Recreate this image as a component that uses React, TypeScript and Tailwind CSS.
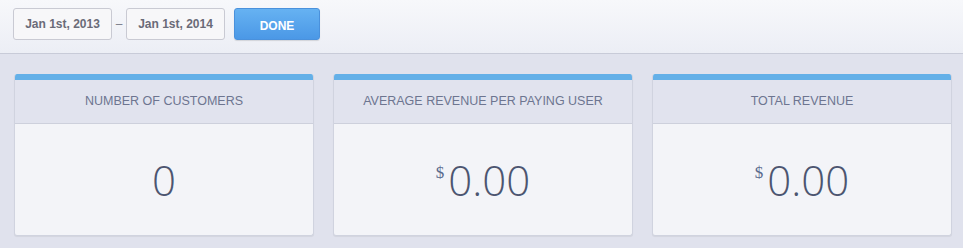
import React from "react";

interface Stat {
  label: string;
  value: string;
  currency?: boolean;
}

const stats: Stat[] = [
  { label: "NUMBER OF CUSTOMERS", value: "0" },
  { label: "AVERAGE REVENUE PER PAYING USER", value: "0.00", currency: true },
  { label: "TOTAL REVENUE", value: "0.00", currency: true },
];

function DateBox({ text }: { text: string }) {
  return (
    <div className="w-[99px] h-[32px] flex items-center justify-center rounded-[3px] border border-[#c9cad3] bg-[#f7f7f9] text-[12px] font-bold text-[#6a6b78]">
      {text}
    </div>
  );
}

function StatCard({ stat }: { stat: Stat }) {
  return (
    <div className="flex flex-col rounded-[3px] overflow-hidden border border-[#d0d3df] border-t-0 bg-[#f3f4f8] shadow-[0_1px_1px_rgba(0,0,0,0.06)]">
      <div className="h-[6px] bg-[#64b0e8]" />
      <div className="h-[44px] flex items-center justify-center bg-[#e1e3ee] border-b border-[#cdd0dc] text-[12.5px] text-[#6d7590]">
        {stat.label}
      </div>
      <div className="h-[111px] flex items-center justify-center text-[#4c5570]">
        {stat.currency && (
          <span className="font-['Liberation_Serif',serif] text-[17px] text-[#5a6a8e] self-start mt-[36px] mr-[4px]">
            $
          </span>
        )}
        <span className="font-['Open_Sans',sans-serif] font-light text-[42px] leading-none">
          {stat.value}
        </span>
      </div>
    </div>
  );
}

export default function App() {
  return (
    <div className="w-[963px] h-[248px] bg-[#e0e2ed] font-['Liberation_Sans',Arial,sans-serif]">
      <div className="h-[54px] flex items-start pt-[8px] pl-[13px] bg-gradient-to-b from-[#f7f8fb] to-[#eceef5] border-b border-[#c8cbd8]">
        <DateBox text="Jan 1st, 2013" />
        <span className="w-[14px] h-[32px] flex items-center justify-center text-[12px] text-[#7a7c88]">
          –
        </span>
        <DateBox text="Jan 1st, 2014" />
        <button className="ml-[9px] w-[86px] h-[32px] flex items-start justify-center pt-[8px] rounded-[3px] border border-[#4a91dc] bg-gradient-to-b from-[#66b2f2] to-[#4b98e6] text-white text-[12px] font-bold shadow-[0_1px_1px_rgba(0,0,0,0.12)]">
          DONE
        </button>
      </div>
      <div className="grid grid-cols-3 gap-[19px] pt-[20px] pl-[14px] pr-[11px]">
        {stats.map((s) => (
          <StatCard key={s.label} stat={s} />
        ))}
      </div>
    </div>
  );
}
